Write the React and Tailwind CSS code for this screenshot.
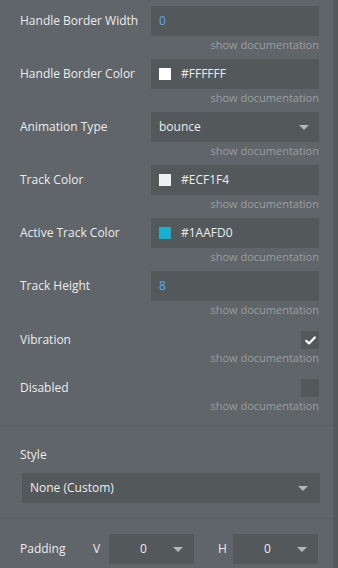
import React from "react";

const Caret = () => (
  <svg width="10" height="5" viewBox="0 0 10 5" className="shrink-0">
    <path d="M0 0H10L5 5Z" fill="#b4b7b9" />
  </svg>
);

const Doc = () => (
  <div className="h-[23px] text-right text-[11px] leading-[18px] text-[#9c9fa1]">
    show documentation
  </div>
);

const InputRow = ({ label, value, swatch, blue, select }) => (
  <div>
    <div className="flex items-center">
      <div className="w-[131px] text-[12px] text-[#ececec]">{label}</div>
      <div className="flex h-[30px] flex-1 items-center bg-[#53585b] pl-2 pr-[10px] text-[12px]">
        {swatch && (
          <span
            className="mr-[10px] h-3 w-3 shrink-0"
            style={{ backgroundColor: swatch }}
          />
        )}
        <span className={"flex-1 " + (blue ? "text-[#5fa8ee]" : "text-[#ececec]")}>
          {value}
        </span>
        {select && <Caret />}
      </div>
    </div>
    <Doc />
  </div>
);

const CheckRow = ({ label, checked }) => (
  <div>
    <div className="flex h-[18px] items-center justify-between">
      <div className="text-[12px] text-[#ececec]">{label}</div>
      <div className="flex h-[18px] w-[18px] items-center justify-center bg-[#53585b]">
        {checked && (
          <svg width="11" height="9" viewBox="0 0 11 9">
            <path
              d="M1.2 4.8L4 7.4L9.8 1.4"
              fill="none"
              stroke="#ffffff"
              strokeWidth="2.2"
              strokeLinecap="round"
              strokeLinejoin="round"
            />
          </svg>
        )}
      </div>
    </div>
    <div className="text-right text-[11px] leading-[18px] text-[#9c9fa1]">
      show documentation
    </div>
  </div>
);

const SmallSelect = ({ value }) => (
  <div className="flex h-[30px] w-[85px] items-center bg-[#53585b] pl-[31px] pr-[11px] text-[12px] text-[#ececec]">
    <span className="flex-1">{value}</span>
    <Caret />
  </div>
);

export default function App() {
  return (
    <div
      className="flex h-[568px] w-[338px] overflow-hidden bg-[#5f6569]"
      style={{ fontFamily: '"Open Sans", "Noto Sans", sans-serif' }}
    >
      <div className="w-[333px] shrink-0">
        <div className="pl-5 pr-[14px] pt-[6px]">
          <InputRow label="Handle Border Width" value="0" blue />
          <InputRow label="Handle Border Color" value="#FFFFFF" swatch="#ffffff" />
          <InputRow label="Animation Type" value="bounce" select />
          <InputRow label="Track Color" value="#ECF1F4" swatch="#ecf1f4" />
          <InputRow label="Active Track Color" value="#1AAFD0" swatch="#1aafd0" />
          <InputRow label="Track Height" value="8" blue />
          <div className="mt-[7px] flex flex-col gap-3">
            <CheckRow label="Vibration" checked />
            <CheckRow label="Disabled" />
          </div>
        </div>
        <div className="mt-[10px] h-px bg-[#575c5f]" />
        <div className="pl-5 pr-[13px] pt-5">
          <div className="text-[12px] leading-[18px] text-[#ececec]">Style</div>
          <div className="ml-[2px] mt-[9px] flex h-[30px] items-center bg-[#53585b] pl-2 pr-[12px] text-[12px] text-[#ececec]">
            <span className="flex-1">None (Custom)</span>
            <Caret />
          </div>
        </div>
        <div className="mt-[15px] h-px bg-[#575c5f]" />
        <div className="flex items-center pl-5 pt-[15px]">
          <div className="w-[73px] text-[12px] text-[#ececec]">Padding</div>
          <div className="w-4 text-[12px] text-[#ececec]">V</div>
          <SmallSelect value="0" />
          <div className="ml-6 w-[15px] text-[12px] text-[#ececec]">H</div>
          <SmallSelect value="0" />
        </div>
      </div>
      <div className="flex-1 bg-[#54595c]" />
    </div>
  );
}
